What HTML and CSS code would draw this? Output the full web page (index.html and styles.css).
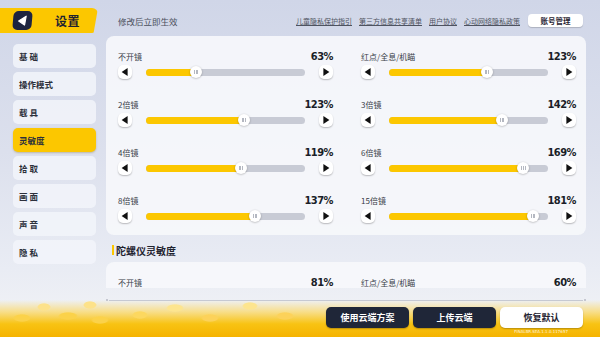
FILE: index.html
```html
<!DOCTYPE html>
<html lang="zh">
<head>
<meta charset="utf-8">
<title>设置</title>
<link rel="stylesheet" href="styles.css">
</head>
<body>
<div class="app">
  <header class="header">
    <div class="tab">
      <div class="back">
        <svg viewBox="0 0 20 20" width="19" height="19"><path d="M6 10.5 L13.5 5.5 L12.6 14.8 Z" fill="#fff" stroke="#fff" stroke-width="1.2" stroke-linejoin="round"/></svg>
      </div>
      <span class="tab-title">设置</span>
    </div>
    <div class="subtitle">修改后立即生效</div>
    <nav class="links">
      <a class="link">儿童隐私保护指引</a>
      <a class="link">第三方信息共享清单</a>
      <a class="link">用户协议</a>
      <a class="link">心动网络隐私政策</a>
      <span class="account">账号管理</span>
    </nav>
  </header>
  <div class="content">
    <aside class="sidebar">
      <div class="nav-item wide">基础</div>
      <div class="nav-item">操作模式</div>
      <div class="nav-item wide">载具</div>
      <div class="nav-item active">灵敏度</div>
      <div class="nav-item wide">拾取</div>
      <div class="nav-item wide">画面</div>
      <div class="nav-item wide">声音</div>
      <div class="nav-item wide">隐私</div>
    </aside>
    <main class="main">
      <div class="scroll">
        <section class="card">
          <div class="row">
            <div class="label-line"><span class="label">不开镜</span><span class="value">63%</span></div>
            <div class="slider-line">
              <span class="arrow"><svg viewBox="0 0 14 14" width="14" height="14"><path d="M3.6 7 L9.6 3 L9.6 11 Z" fill="#111"/></svg></span>
              <div class="track"><div class="fill" style="width:31.5%"></div><span class="knob" style="left:31.5%"><i></i><i></i><i></i></span></div>
              <span class="arrow"><svg viewBox="0 0 14 14" width="14" height="14"><path d="M10.4 7 L4.4 3 L4.4 11 Z" fill="#111"/></svg></span>
            </div>
          </div>
          <div class="row">
            <div class="label-line"><span class="label">红点/全息/机瞄</span><span class="value">123%</span></div>
            <div class="slider-line">
              <span class="arrow"><svg viewBox="0 0 14 14" width="14" height="14"><path d="M3.6 7 L9.6 3 L9.6 11 Z" fill="#111"/></svg></span>
              <div class="track"><div class="fill" style="width:61.5%"></div><span class="knob" style="left:61.5%"><i></i><i></i><i></i></span></div>
              <span class="arrow"><svg viewBox="0 0 14 14" width="14" height="14"><path d="M10.4 7 L4.4 3 L4.4 11 Z" fill="#111"/></svg></span>
            </div>
          </div>
          <div class="row">
            <div class="label-line"><span class="label">2倍镜</span><span class="value">123%</span></div>
            <div class="slider-line">
              <span class="arrow"><svg viewBox="0 0 14 14" width="14" height="14"><path d="M3.6 7 L9.6 3 L9.6 11 Z" fill="#111"/></svg></span>
              <div class="track"><div class="fill" style="width:61.5%"></div><span class="knob" style="left:61.5%"><i></i><i></i><i></i></span></div>
              <span class="arrow"><svg viewBox="0 0 14 14" width="14" height="14"><path d="M10.4 7 L4.4 3 L4.4 11 Z" fill="#111"/></svg></span>
            </div>
          </div>
          <div class="row">
            <div class="label-line"><span class="label">3倍镜</span><span class="value">142%</span></div>
            <div class="slider-line">
              <span class="arrow"><svg viewBox="0 0 14 14" width="14" height="14"><path d="M3.6 7 L9.6 3 L9.6 11 Z" fill="#111"/></svg></span>
              <div class="track"><div class="fill" style="width:71%"></div><span class="knob" style="left:71%"><i></i><i></i><i></i></span></div>
              <span class="arrow"><svg viewBox="0 0 14 14" width="14" height="14"><path d="M10.4 7 L4.4 3 L4.4 11 Z" fill="#111"/></svg></span>
            </div>
          </div>
          <div class="row">
            <div class="label-line"><span class="label">4倍镜</span><span class="value">119%</span></div>
            <div class="slider-line">
              <span class="arrow"><svg viewBox="0 0 14 14" width="14" height="14"><path d="M3.6 7 L9.6 3 L9.6 11 Z" fill="#111"/></svg></span>
              <div class="track"><div class="fill" style="width:59.5%"></div><span class="knob" style="left:59.5%"><i></i><i></i><i></i></span></div>
              <span class="arrow"><svg viewBox="0 0 14 14" width="14" height="14"><path d="M10.4 7 L4.4 3 L4.4 11 Z" fill="#111"/></svg></span>
            </div>
          </div>
          <div class="row">
            <div class="label-line"><span class="label">6倍镜</span><span class="value">169%</span></div>
            <div class="slider-line">
              <span class="arrow"><svg viewBox="0 0 14 14" width="14" height="14"><path d="M3.6 7 L9.6 3 L9.6 11 Z" fill="#111"/></svg></span>
              <div class="track"><div class="fill" style="width:84.5%"></div><span class="knob" style="left:84.5%"><i></i><i></i><i></i></span></div>
              <span class="arrow"><svg viewBox="0 0 14 14" width="14" height="14"><path d="M10.4 7 L4.4 3 L4.4 11 Z" fill="#111"/></svg></span>
            </div>
          </div>
          <div class="row">
            <div class="label-line"><span class="label">8倍镜</span><span class="value">137%</span></div>
            <div class="slider-line">
              <span class="arrow"><svg viewBox="0 0 14 14" width="14" height="14"><path d="M3.6 7 L9.6 3 L9.6 11 Z" fill="#111"/></svg></span>
              <div class="track"><div class="fill" style="width:68.5%"></div><span class="knob" style="left:68.5%"><i></i><i></i><i></i></span></div>
              <span class="arrow"><svg viewBox="0 0 14 14" width="14" height="14"><path d="M10.4 7 L4.4 3 L4.4 11 Z" fill="#111"/></svg></span>
            </div>
          </div>
          <div class="row">
            <div class="label-line"><span class="label">15倍镜</span><span class="value">181%</span></div>
            <div class="slider-line">
              <span class="arrow"><svg viewBox="0 0 14 14" width="14" height="14"><path d="M3.6 7 L9.6 3 L9.6 11 Z" fill="#111"/></svg></span>
              <div class="track"><div class="fill" style="width:90.5%"></div><span class="knob" style="left:90.5%"><i></i><i></i><i></i></span></div>
              <span class="arrow"><svg viewBox="0 0 14 14" width="14" height="14"><path d="M10.4 7 L4.4 3 L4.4 11 Z" fill="#111"/></svg></span>
            </div>
          </div>
        </section>
        <h2 class="section-title">陀螺仪灵敏度</h2>
        <section class="card">
          <div class="row">
            <div class="label-line"><span class="label">不开镜</span><span class="value">81%</span></div>
            <div class="slider-line">
              <span class="arrow"><svg viewBox="0 0 14 14" width="14" height="14"><path d="M3.6 7 L9.6 3 L9.6 11 Z" fill="#111"/></svg></span>
              <div class="track"><div class="fill" style="width:40.5%"></div><span class="knob" style="left:40.5%"><i></i><i></i><i></i></span></div>
              <span class="arrow"><svg viewBox="0 0 14 14" width="14" height="14"><path d="M10.4 7 L4.4 3 L4.4 11 Z" fill="#111"/></svg></span>
            </div>
          </div>
          <div class="row">
            <div class="label-line"><span class="label">红点/全息/机瞄</span><span class="value">60%</span></div>
            <div class="slider-line">
              <span class="arrow"><svg viewBox="0 0 14 14" width="14" height="14"><path d="M3.6 7 L9.6 3 L9.6 11 Z" fill="#111"/></svg></span>
              <div class="track"><div class="fill" style="width:30%"></div><span class="knob" style="left:30%"><i></i><i></i><i></i></span></div>
              <span class="arrow"><svg viewBox="0 0 14 14" width="14" height="14"><path d="M10.4 7 L4.4 3 L4.4 11 Z" fill="#111"/></svg></span>
            </div>
          </div>
        </section>
      </div>
      <div class="divider"><span class="dot"></span><span class="line"></span><span class="dot"></span></div>
      <div class="actions">
        <button class="btn dark">使用云端方案</button>
        <button class="btn dark">上传云端</button>
        <button class="btn light">恢复默认</button>
      </div>
      <div class="version">FINALBR.SEA.1.1.0.117657</div>
    </main>
  </div>
</div>
</body>
</html>
```
FILE: styles.css
```css
html, body {
  margin: 0;
  padding: 0;
}
body {
  width: 600px;
  height: 337px;
  overflow: hidden;
  font-family: "Noto Sans CJK SC", "Noto Sans", sans-serif;
  color: #2a2e38;
  background-color: #dfe3ef;
  background-image:
    radial-gradient(ellipse 9px 4px at 22px 318px, #fbd24a 80%, rgba(251,210,74,0) 100%),
    radial-gradient(ellipse 7px 4px at 44px 307px, #fde28a 80%, rgba(253,226,138,0) 100%),
    radial-gradient(ellipse 10px 4px at 68px 316px, #fbd24a 80%, rgba(251,210,74,0) 100%),
    radial-gradient(ellipse 7px 4px at 90px 305px, #fde28a 80%, rgba(253,226,138,0) 100%),
    radial-gradient(ellipse 9px 4px at 100px 320px, #fbd24a 80%, rgba(251,210,74,0) 100%),
    radial-gradient(ellipse 8px 4px at 140px 315px, #fcd860 80%, rgba(252,216,96,0) 100%),
    radial-gradient(ellipse 9px 4px at 175px 308px, #fde58f 80%, rgba(253,229,143,0) 100%),
    radial-gradient(ellipse 9px 4px at 210px 318px, #fcd25a 80%, rgba(252,210,90,0) 100%),
    radial-gradient(ellipse 8px 4px at 250px 306px, #fde58f 80%, rgba(253,229,143,0) 100%),
    radial-gradient(ellipse 9px 4px at 285px 316px, #fcd25a 80%, rgba(252,210,90,0) 100%),
    linear-gradient(180deg, rgba(249,196,20,0) 0, rgba(249,196,20,0) 300px, rgba(252,214,90,0.7) 312px, #f8c313 324px, #f5b300 337px),
    linear-gradient(180deg, #d0d6e8 0%, #dce0ed 45%, #e9ecf4 80%, #eef0f5 90%);
}
.app {
  display: flex;
  flex-direction: column;
  height: 337px;
}

/* header */
.header {
  display: flex;
  align-items: flex-start;
  height: 36px;
  padding-top: 8px;
  box-sizing: border-box;
}
.tab {
  width: 98px;
  height: 25px;
  display: flex;
  align-items: center;
  background: #fcc700;
  clip-path: polygon(0 0, 100% 0, 95.5% 100%, 0 100%);
  border-radius: 0 6px 6px 0;
}
.back {
  margin-left: 13px;
  width: 19px;
  height: 19px;
  background: #1d2440;
  border-radius: 5px;
  transform: skewX(-5deg);
  display: flex;
}
.tab-title {
  margin-left: 23px;
  font-size: 12px;
  font-weight: 700;
  color: #1f2330;
  letter-spacing: 0.5px;
}
.subtitle {
  margin-left: 20px;
  height: 25px;
  display: flex;
  align-items: center;
  font-size: 8.5px;
  color: #4a4f5c;
}
.links {
  margin-left: auto;
  margin-right: 17px;
  height: 25px;
  display: flex;
  align-items: center;
  gap: 7px;
}
.link {
  font-size: 7px;
  color: #4e5360;
  text-decoration: underline;
  text-underline-offset: 1px;
}
.account {
  margin-left: 1px;
  width: 55px;
  height: 13px;
  border-radius: 4px;
  background: #fff;
  box-shadow: 0 1px 1px rgba(0,0,0,0.18);
  display: flex;
  align-items: center;
  justify-content: center;
  font-size: 7.5px;
  font-weight: 700;
  color: #1f2330;
}

/* body */
.content {
  display: flex;
  flex: 1;
  min-height: 0;
}
.sidebar {
  width: 83px;
  margin-left: 13px;
  margin-top: 8px;
  display: flex;
  flex-direction: column;
  gap: 4px;
}
.nav-item {
  height: 24px;
  box-sizing: border-box;
  padding-left: 6px;
  display: flex;
  align-items: center;
  border-radius: 5px;
  background: rgba(242,244,250,0.85);
  font-size: 8.5px;
  font-weight: 700;
  color: #2c303b;
}
.nav-item.wide {
  letter-spacing: 2px;
}
.nav-item.active {
  background: #fcc700;
  box-shadow: 0 1px 2px rgba(120,90,0,0.3);
}

.main {
  margin-left: 10px;
  width: 480px;
  display: flex;
  flex-direction: column;
}
.scroll {
  height: 252px;
  overflow: hidden;
}
.card {
  background: rgba(246,247,251,0.92);
  border-radius: 8px;
  padding: 14px 11px 12px 12px;
  display: grid;
  grid-template-columns: 215px 215px;
  column-gap: 28px;
  row-gap: 19px;
}
.row {
  display: flex;
  flex-direction: column;
}
.label-line {
  height: 12px;
  display: flex;
  align-items: center;
  justify-content: space-between;
}
.label {
  font-size: 8px;
  color: #373b46;
}
.value {
  font-family: "DejaVu Sans Condensed", "DejaVu Sans", sans-serif;
  font-stretch: condensed;
  font-size: 11px;
  font-weight: 700;
  color: #1a1e28;
  letter-spacing: -0.5px;
}
.slider-line {
  margin-top: 3px;
  height: 14px;
  display: flex;
  align-items: center;
}
.arrow {
  width: 14px;
  height: 14px;
  border-radius: 5px;
  background: #fff;
  box-shadow: 0 1px 1.5px rgba(0,0,0,0.25);
  display: flex;
}
.track {
  position: relative;
  flex: 1;
  margin: 0 14px;
  height: 7px;
  border-radius: 4px;
  background: #c8cbd5;
}
.fill {
  height: 100%;
  border-radius: 4px;
  background: #fcc700;
}
.knob {
  position: absolute;
  top: 50%;
  width: 12px;
  height: 12px;
  border-radius: 50%;
  background: #fff;
  box-shadow: 0 0.5px 2px rgba(0,0,0,0.3);
  transform: translate(-50%, -50%);
  display: flex;
  align-items: center;
  justify-content: center;
  gap: 1px;
}
.knob i {
  display: block;
  width: 0.7px;
  height: 4px;
  background: #b4b8c1;
}
.section-title {
  margin: 8px 0 5px 6px;
  height: 14px;
  display: flex;
  align-items: center;
  font-size: 10px;
  font-weight: 700;
  color: #1f2330;
}
.section-title::before {
  content: "";
  width: 2px;
  height: 10px;
  background: #fcc700;
  margin-right: 2px;
}
.divider {
  margin-top: 11px;
  height: 2px;
  display: flex;
  align-items: center;
}
.dot {
  width: 2px;
  height: 2px;
  border-radius: 50%;
  background: #b7bac4;
}
.line {
  flex: 1;
  height: 1px;
  margin: 0 1px;
  background: #c6c9d2;
}
.actions {
  margin-top: 6px;
  margin-right: 3px;
  display: flex;
  justify-content: flex-end;
  gap: 4px;
}
.btn {
  width: 83px;
  height: 21px;
  border: none;
  border-radius: 5px;
  font-family: "Noto Sans CJK SC", sans-serif;
  font-size: 9px;
  font-weight: 700;
  padding: 0;
  box-shadow: 0 1px 1.5px rgba(0,0,0,0.25);
}
.btn.dark {
  background: #1f2638;
  color: #fff;
}
.btn.light {
  background: #fff;
  color: #1f2330;
}
.version {
  align-self: flex-end;
  margin-right: 18px;
  font-family: "DejaVu Sans", sans-serif;
  font-size: 4px;
  color: rgba(255,255,255,0.85);
  line-height: 5px;
  margin-top: 1px;
}
```
